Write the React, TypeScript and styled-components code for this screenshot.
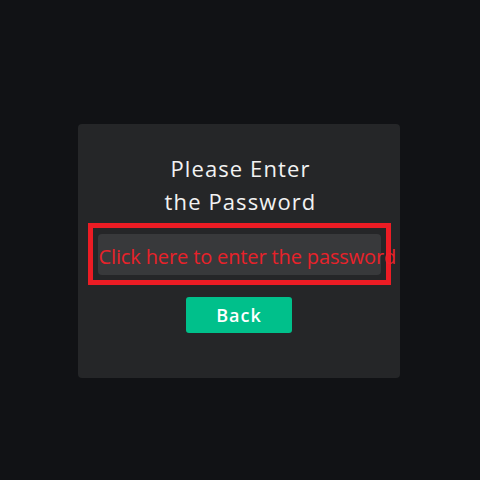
import { FC } from 'react';
import { createGlobalStyle, styled } from 'styled-components';

const GlobalStyle = createGlobalStyle`
  html, body {
    margin: 0;
    padding: 0;
    background: #111215;
  }
  body {
    font-family: 'Open Sans', 'Noto Sans', sans-serif;
  }
`;

const App: FC = () => {
  return (
    <>
      <GlobalStyle />
      <Page>
        <Card>
          <Title>
            Please Enter
            <br />
            the Password
          </Title>
          <Highlight>
            <PasswordField>Click here to enter the password</PasswordField>
          </Highlight>
          <BackButton type='button'>Back</BackButton>
        </Card>
      </Page>
    </>
  );
};

export default App;

const Page = styled.div`
  display: flex;
  justify-content: flex-start;
  height: 480px;
  padding: 124px 0 0 78px;
  box-sizing: border-box;
`;

const Card = styled.div`
  display: flex;
  flex-direction: column;
  align-items: center;
  width: 322px;
  height: 254px;
  padding-top: 28px;
  box-sizing: border-box;
  background: #252628;
  border-radius: 4px;
`;

const Title = styled.h1`
  margin: 0 0 0 3px;
  font-size: 22px;
  font-weight: 400;
  line-height: 33px;
  letter-spacing: 1.1px;
  color: #f2f2f2;
  text-align: center;
`;

const Highlight = styled.div`
  margin-top: 5px;
  width: 303px;
  height: 62px;
  padding: 6px 5px 5px;
  box-sizing: border-box;
  border: 5px solid #ec1c24;
`;

const PasswordField = styled.div`
  display: flex;
  align-items: center;
  width: 283px;
  height: 41px;
  padding: 3px 0 0 1px;
  box-sizing: border-box;
  background: #38393b;
  border-radius: 4px;
  font-size: 20px;
  letter-spacing: -0.13px;
  color: #e8222a;
  white-space: nowrap;
  overflow: visible;
`;

const BackButton = styled.button`
  margin-top: 12px;
  width: 106px;
  height: 36px;
  border: none;
  border-radius: 3px;
  background: #00c08b;
  color: #ffffff;
  font-family: 'Open Sans', 'Noto Sans', sans-serif;
  font-size: 18px;
  font-weight: 600;
  letter-spacing: 1px;
  cursor: pointer;
`;
